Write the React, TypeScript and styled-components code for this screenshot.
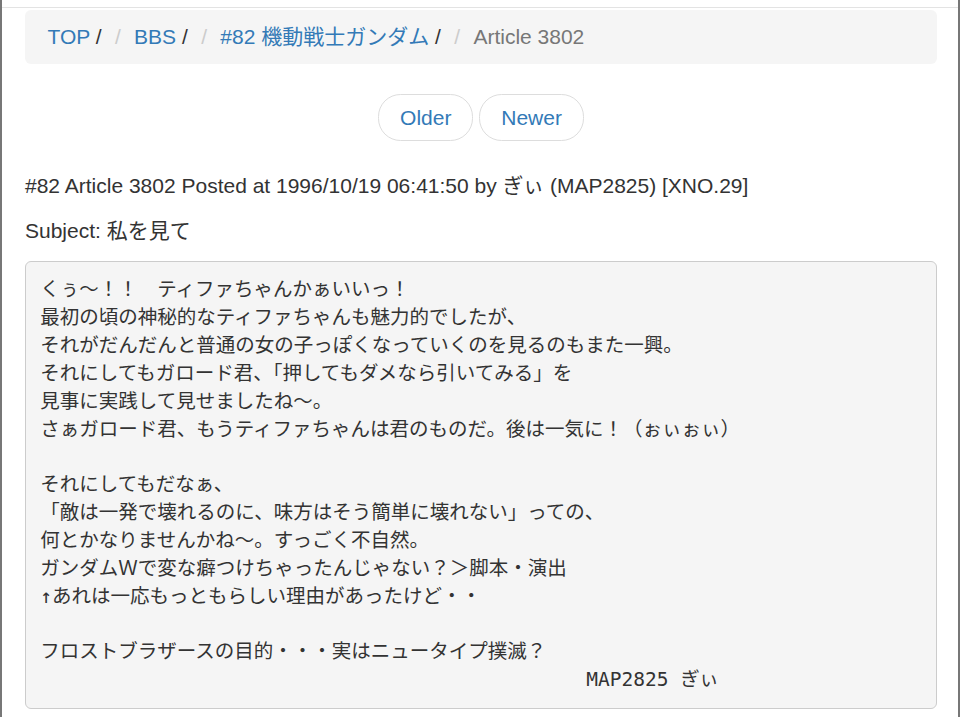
import React from "react";
import styled, { createGlobalStyle } from "styled-components";

const GlobalStyle = createGlobalStyle`
  html, body { margin: 0; padding: 0; background: #fff; }
  body {
    font-family: "Liberation Sans", Arial, "Noto Sans CJK JP", sans-serif;
    font-size: 21px;
    line-height: 30px;
    color: #333;
  }
  * { box-sizing: border-box; }
`;

const Frame = styled.div`
  min-height: 100vh;
  border-left: 2px solid #777;
  border-right: 2px solid #777;
`;

const TopRule = styled.div`
  height: 8px;
  border-bottom: 1px solid #e3e3e3;
`;

const Container = styled.div`
  padding: 2px 21px 0 23px;
`;

const Breadcrumb = styled.ol`
  list-style: none;
  margin: 0 0 30px;
  padding: 12px 22.5px;
  background: #f5f5f5;
  border-radius: 6px;
`;

const Crumb = styled.li<{ $active?: boolean }>`
  display: inline-block;
  color: ${(p) => (p.$active ? "#777" : "#333")};
  &:not(:first-child)::before {
    content: "/\\00a0";
    padding: 0 7.5px;
    color: #ccc;
  }
`;

const Link = styled.a`
  color: #337ab7;
  text-decoration: none;
`;

const Pager = styled.ul`
  list-style: none;
  margin: 30px 0;
  padding: 0;
  text-align: center;
`;

const PagerItem = styled.li`
  display: inline;
`;

const PagerLink = styled.a`
  display: inline-block;
  padding: 7.5px 21px;
  background: #fff;
  border: 1px solid #ddd;
  border-radius: 22.5px;
  color: #337ab7;
  text-decoration: none;
`;

const Para = styled.p`
  margin: 0 0 15px;
`;

const Pre = styled.pre`
  margin: 0 0 15px;
  padding: 14.25px;
  font-family: "DejaVu Sans Mono", "Noto Sans CJK JP", monospace;
  font-size: 19.5px;
  line-height: 27.86px;
  color: #333;
  background: #f5f5f5;
  border: 1px solid #ccc;
  border-radius: 6px;
  white-space: pre-wrap;
  word-break: break-all;
`;

const crumbs = [
  { label: "TOP" },
  { label: "BBS" },
  { label: "#82 機動戦士ガンダム" },
];

const body = [
  "くぅ～！！　ティファちゃんかぁいいっ！",
  "最初の頃の神秘的なティファちゃんも魅力的でしたが、",
  "それがだんだんと普通の女の子っぽくなっていくのを見るのもまた一興。",
  "それにしてもガロード君、「押してもダメなら引いてみる」を",
  "見事に実践して見せましたね～。",
  "さぁガロード君、もうティファちゃんは君のものだ。後は一気に！（ぉぃぉぃ）",
  "",
  "それにしてもだなぁ、",
  "「敵は一発で壊れるのに、味方はそう簡単に壊れない」っての、",
  "何とかなりませんかね～。すっごく不自然。",
  "ガンダムＷで変な癖つけちゃったんじゃない？＞脚本・演出",
  "↑あれは一応もっともらしい理由があったけど・・",
  "",
  "フロストブラザースの目的・・・実はニュータイプ撲滅？",
  "　".repeat(28) + "MAP2825 ぎぃ",
].join("\n");

export default function App() {
  return (
    <>
      <GlobalStyle />
      <Frame>
        <TopRule />
        <Container>
          <Breadcrumb>
            {crumbs.map((c) => (
              <React.Fragment key={c.label}>
                <Crumb>
                  <Link href="#">{c.label}</Link> /
                </Crumb>{" "}
              </React.Fragment>
            ))}
            <Crumb $active>Article 3802</Crumb>
          </Breadcrumb>
          <Pager>
            <PagerItem>
              <PagerLink href="#">Older</PagerLink>
            </PagerItem>{" "}
            <PagerItem>
              <PagerLink href="#">Newer</PagerLink>
            </PagerItem>
          </Pager>
          <Para>
            #82 Article 3802 Posted at 1996/10/19 06:41:50 by ぎぃ (MAP2825) [XNO.29]
          </Para>
          <Para>Subject: 私を見て</Para>
          <Pre>{body}</Pre>
        </Container>
      </Frame>
    </>
  );
}
